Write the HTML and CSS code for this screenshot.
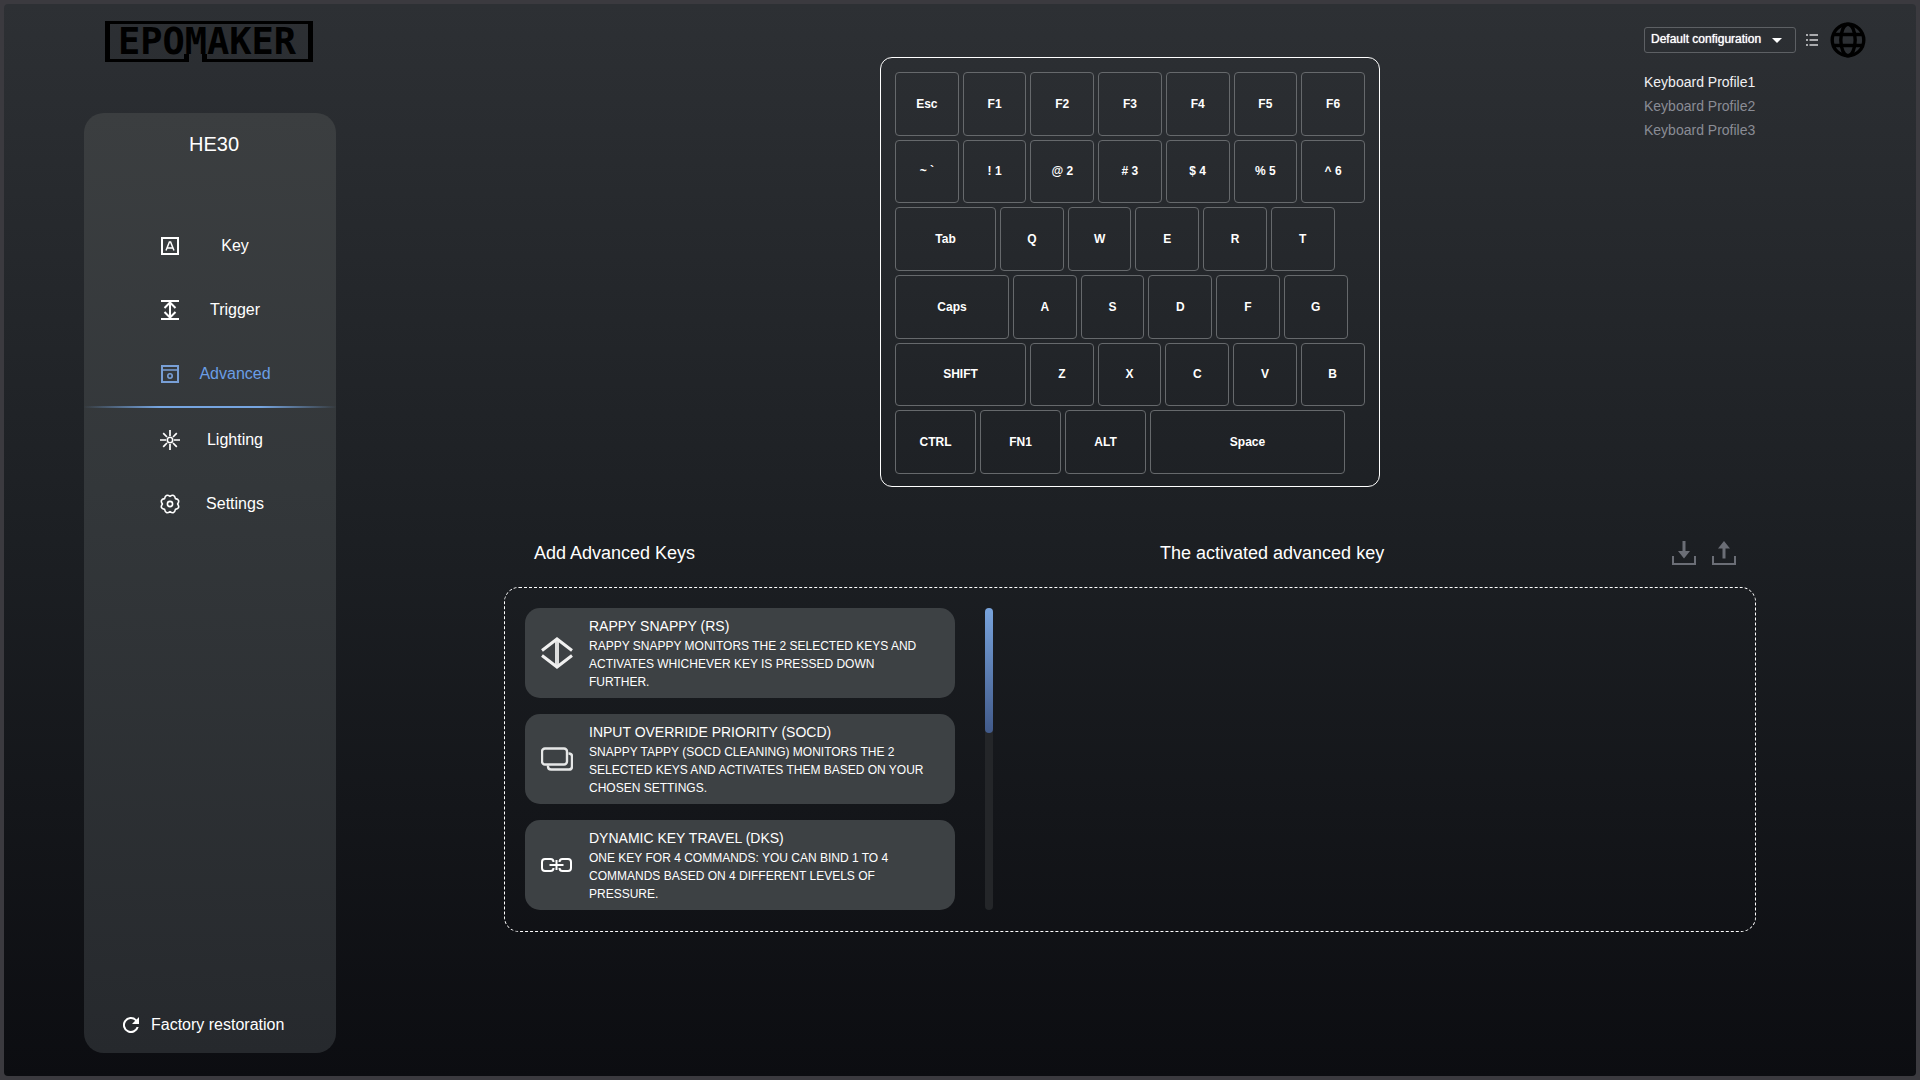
FILE: index.html
```html
<!DOCTYPE html>
<html lang="en">
<head>
<meta charset="UTF-8">
<meta name="viewport" content="width=device-width, initial-scale=1.0">
<title>HE30 - Advanced</title>
<link rel="stylesheet" href="styles.css">
</head>
<body>
<div class="app">

  <!-- Logo and side menu -->
  <div class="left">
    <div class="logo">
      <svg class="logo-frame" viewBox="0 0 208 41" preserveAspectRatio="none" aria-hidden="true">
        <path d="M84 33V41H0V0H208V41H97V33H102V38H203V3H5V38H79V33Z"/>
      </svg>
      <span class="logo-text">EPOMAKER</span>
    </div>

    <aside class="sidebar">
      <h1 class="device">HE30</h1>
      <nav class="menu">
        <a class="menu-item" href="#key">
          <svg viewBox="0 0 18 18" fill="none" stroke="currentColor"><rect x="1" y="1" width="16" height="16" stroke-width="2"/><path d="M5 13.5 8.4 5H9.6L13 13.5M6.4 11H11.6" stroke-width="1.5"/></svg>
          <span>Key</span>
        </a>
        <a class="menu-item" href="#trigger">
          <svg viewBox="0 0 18 20" fill="none" stroke="currentColor"><path d="M0 1H18M0 19H18M9 2V18" stroke-width="2"/><path d="M3.5 8 9 2.5 14.5 8M3.5 12 9 17.5 14.5 12" stroke-width="2"/></svg>
          <span>Trigger</span>
        </a>
        <a class="menu-item active" href="#advanced">
          <svg viewBox="0 0 18 18" fill="none" stroke="#789fd6"><rect x="1" y="1" width="16" height="16" stroke-width="2"/><path d="M1 5H17" stroke-width="1.5"/><circle cx="9" cy="11" r="2.2" stroke-width="1.6"/></svg>
          <span>Advanced</span>
        </a>
        <a class="menu-item" href="#lighting">
          <svg class="wide" viewBox="0 0 20 20" fill="none" stroke="currentColor"><circle cx="10" cy="10" r="2.7" stroke-width="1.6"/><path d="M10 0V6M10 14V20M0 10H6M14 10H20M3.2 3.2 7 7M13 13 16.8 16.8M3.2 16.8 7 13M13 7 16.8 3.2" stroke-width="1.7"/></svg>
          <span>Lighting</span>
        </a>
        <a class="menu-item" href="#settings">
          <svg class="wide" viewBox="0 0 20 20" fill="none" stroke="currentColor" stroke-width="1.6" stroke-linejoin="round"><path d="M17.6 10Q20.6 14.4 15.4 15.4Q14.4 20.6 10 17.6Q5.600 20.600 4.600 15.400Q-.6 14.400 2.400 10Q-.6 5.600 4.600 4.600Q5.600 -.6 10 2.400Q14.400 -.6 15.400 4.600Q20.600 5.600 17.600 10Z"/><circle cx="10" cy="10" r="2.6"/></svg>
          <span>Settings</span>
        </a>
      </nav>
      <button class="restore" type="button">
        <svg viewBox="0 0 16 16"><path d="M13.6 2.4A8 8 0 1 0 15.7 10H13.6A6 6 0 1 1 12.2 3.8L9 7H16V0Z" fill="currentColor"/></svg>
        Factory restoration
      </button>
    </aside>
  </div>

  <main class="main">
    <div class="stage">
      <!-- Left half of the split keyboard -->
      <div class="keyboard">
        <div class="row">
          <button class="key">Esc</button>
          <button class="key">F1</button>
          <button class="key">F2</button>
          <button class="key">F3</button>
          <button class="key">F4</button>
          <button class="key">F5</button>
          <button class="key">F6</button>
        </div>
        <div class="row">
          <button class="key">~ `</button>
          <button class="key">! 1</button>
          <button class="key">@ 2</button>
          <button class="key"># 3</button>
          <button class="key">$ 4</button>
          <button class="key">% 5</button>
          <button class="key">^ 6</button>
        </div>
        <div class="row">
          <button class="key key-tab">Tab</button>
          <button class="key">Q</button>
          <button class="key">W</button>
          <button class="key">E</button>
          <button class="key">R</button>
          <button class="key">T</button>
        </div>
        <div class="row">
          <button class="key key-caps">Caps</button>
          <button class="key">A</button>
          <button class="key">S</button>
          <button class="key">D</button>
          <button class="key">F</button>
          <button class="key">G</button>
        </div>
        <div class="row">
          <button class="key key-shift">SHIFT</button>
          <button class="key">Z</button>
          <button class="key">X</button>
          <button class="key">C</button>
          <button class="key">V</button>
          <button class="key">B</button>
        </div>
        <div class="row">
          <button class="key key-mod">CTRL</button>
          <button class="key key-mod">FN1</button>
          <button class="key key-mod">ALT</button>
          <button class="key key-space">Space</button>
        </div>
      </div>

      <!-- Configuration and profiles -->
      <div class="config">
        <div class="config-bar">
          <div class="select-wrap">
            <select class="config-select" aria-label="Configuration">
              <option>Default configuration</option>
            </select>
            <svg class="caret" viewBox="0 0 10 5"><path d="M0 0H10L5 5Z" fill="#fff"/></svg>
          </div>
          <button class="icon-button list-button" type="button" aria-label="Configuration list">
            <svg viewBox="0 0 12 12" fill="none" stroke="#d4d5d7" stroke-width="1.3"><path d="M0 1H2M3.5 1H12M0 6H2M3.5 6H12M0 11H2M3.5 11H12"/></svg>
          </button>
          <button class="icon-button globe-button" type="button" aria-label="Language">
            <svg viewBox="0 0 36 36" fill="none" stroke="#000" stroke-width="3.4"><circle cx="18" cy="18" r="15.8"/><ellipse cx="18" cy="18" rx="7.2" ry="15.8"/><path d="M3.5 12.5H32.5M3.5 23.5H32.5"/></svg>
          </button>
        </div>
        <div class="profiles">
          <button class="profile current" type="button">Keyboard Profile1</button>
          <button class="profile" type="button">Keyboard Profile2</button>
          <button class="profile" type="button">Keyboard Profile3</button>
        </div>
      </div>
    </div>

    <section class="advanced">
      <div class="headings">
        <h2>Add Advanced Keys</h2>
        <h2>The activated advanced key</h2>
        <div class="actions">
          <button class="icon-button" type="button" aria-label="Import">
            <svg viewBox="0 0 24 24"><path d="M1 15V23H23V15" fill="none" stroke="currentColor" stroke-width="2"/><path d="M10.5 0H13.5V10H18L12 17.5 6 10H10.5Z" fill="currentColor"/></svg>
          </button>
          <button class="icon-button" type="button" aria-label="Export">
            <svg viewBox="0 0 24 24"><path d="M1 15V23H23V15" fill="none" stroke="currentColor" stroke-width="2"/><path d="M10.5 17.5H13.5V7.5H18L12 0 6 7.5H10.5Z" fill="currentColor"/></svg>
          </button>
        </div>
      </div>

      <div class="panel">
        <div class="card-list">
          <button class="card" type="button">
            <svg viewBox="0 0 32 32" fill="none" stroke="#f0f0f0"><path d="M16 2V30" stroke="#dcdddd" stroke-width="4"/><path d="M1 13.5 16 2 31 13.5M1 18.5 16 30 31 18.5" stroke-width="3"/></svg>
            <span class="card-text">
              <span class="card-title">RAPPY SNAPPY (RS)</span>
              <span class="card-desc">RAPPY SNAPPY MONITORS THE 2 SELECTED KEYS AND ACTIVATES WHICHEVER KEY IS PRESSED DOWN FURTHER.</span>
            </span>
          </button>
          <button class="card" type="button">
            <svg viewBox="0 0 32 32" fill="none" stroke="#e6e7e7"><rect x="1" y="5.5" width="25" height="16" rx="3" stroke-width="2.4"/><path d="M27.5 10.5H28Q31 10.5 31 13.5V23.5Q31 26.5 28 26.5H10Q7 26.5 7 23.5V22.5" stroke-width="2.4"/></svg>
            <span class="card-text">
              <span class="card-title">INPUT OVERRIDE PRIORITY (SOCD)</span>
              <span class="card-desc">SNAPPY TAPPY (SOCD CLEANING) MONITORS THE 2 SELECTED KEYS AND ACTIVATES THEM BASED ON YOUR CHOSEN SETTINGS.</span>
            </span>
          </button>
          <button class="card" type="button">
            <svg viewBox="0 0 32 32" fill="none" stroke="#fff" stroke-width="2"><path d="M12.5 13Q12.500 10 9.500 10H4Q1 10 1 13V19Q1 22 4 22H9.500Q12.500 22 12.500 19M18.500 13Q18.500 10 21.500 10H27Q30 10 30 13V19Q30 22 27 22H21.500Q18.500 22 18.500 19M8.500 16H22.500M15.500 11V21"/></svg>
            <span class="card-text">
              <span class="card-title">DYNAMIC KEY TRAVEL (DKS)</span>
              <span class="card-desc">ONE KEY FOR 4 COMMANDS: YOU CAN BIND 1 TO 4 COMMANDS BASED ON 4 DIFFERENT LEVELS OF PRESSURE.</span>
            </span>
          </button>
        </div>
        <div class="scrollbar"><div class="thumb"></div></div>
        <div class="activated"></div>
      </div>
    </section>
  </main>

</div>
</body>
</html>
```
FILE: styles.css
```css
* {
  box-sizing: border-box;
}
body {
  margin: 0;
  padding: 4px;
  background: #3b3a3f;
  color: #fff;
  font-family: "Liberation Sans", Arial, sans-serif;
  font-size: 16px;
}
button {
  margin: 0;
  padding: 0;
  border: none;
  background: none;
  color: inherit;
  font: inherit;
  cursor: pointer;
}
svg {
  display: block;
}
.app {
  display: flex;
  gap: 8px;
  min-height: calc(100vh - 8px);
  padding-left: 80px;
  border-radius: 4px;
  background: linear-gradient(#2d3034, #1c1f23 50%, #0c0d11);
}

/* Left column */
.left {
  display: flex;
  flex-direction: column;
  flex: none;
  width: 252px;
  padding: 17px 0 23px;
}
.logo {
  position: relative;
  width: 208px;
  height: 41px;
  margin: 0 0 51px 21px;
  padding-right: 4px;
  color: #000;
  text-align: center;
}
.logo-frame {
  position: absolute;
  inset: 0;
  width: 100%;
  height: 100%;
}
.logo-text {
  font-family: "DejaVu Sans Mono", monospace;
  font-size: 37px;
  font-weight: bold;
  line-height: 41px;
}
.sidebar {
  display: flex;
  flex-direction: column;
  flex: 1;
  padding: 16px 0 13px;
  border-radius: 20px;
  background: linear-gradient(#3b3e40, #33373a 40%, #26292d);
}
.device {
  margin: 0;
  padding-left: 8px;
  font-size: 20px;
  font-weight: normal;
  line-height: 30px;
  text-align: center;
}
.menu {
  flex: 1;
  margin-top: 55px;
}
.menu-item {
  display: grid;
  grid-template-columns: 20px 88px;
  justify-content: center;
  align-items: center;
  gap: 11px;
  height: 64px;
  padding-left: 19px;
  color: #fff;
  text-align: center;
  text-decoration: none;
}
.menu-item svg {
  justify-self: center;
  width: 18px;
  height: 20px;
}
.menu-item svg.wide {
  width: 20px;
}
.menu-item.active {
  box-sizing: content-box;
  height: 64px;
  color: #6a9ee6;
  border-bottom: 2px solid;
  border-image: linear-gradient(90deg, transparent, #76a5e0 30%, #76a5e0 70%, transparent) 1;
}
.restore {
  display: flex;
  align-items: center;
  gap: 12px;
  margin-left: 39px;
  line-height: 30px;
}
.restore svg {
  width: 16px;
  height: 16px;
}

/* Keyboard */
.main {
  flex: 1;
}
.stage {
  display: grid;
  grid-template-columns: 1fr 500px 1fr;
  align-items: start;
}
.keyboard {
  grid-column: 2;
  display: grid;
  grid-template-rows: repeat(6, 1fr);
  gap: 4px;
  aspect-ratio: 500 / 430;
  margin-top: 53px;
  padding: 14px 14px 12px;
  border: 1px solid #fff;
  border-radius: 12px;
}
.row {
  display: flex;
  gap: 4px;
}
.key {
  width: calc((100% - 24px) / 7);
  border: 1px solid #66696c;
  border-radius: 4px;
  font-size: 12px;
  font-weight: bold;
}
.key-tab {
  width: 101px;
}
.key-caps {
  width: 114px;
}
.key-shift {
  width: 131px;
}
.key-mod {
  width: 81px;
}
.key-space {
  width: 195px;
}

/* Configuration */
.config {
  justify-self: end;
  padding: 18px 50px 0 0;
}
.config-bar {
  display: flex;
  align-items: center;
}
.select-wrap {
  position: relative;
}
.config-select {
  appearance: none;
  width: 152px;
  height: 26px;
  padding: 0 24px 2px 6px;
  border: 1px solid #5d6064;
  border-radius: 3px;
  background: transparent;
  color: #fff;
  font-family: inherit;
  font-size: 12px;
  text-shadow: 0 0 1px #fff;
}
.config-select option {
  background: #2d3034;
}
.caret {
  position: absolute;
  top: 11px;
  right: 14px;
  width: 10px;
  height: 5px;
  pointer-events: none;
}
.list-button {
  margin: 0 12px 0 10px;
}
.list-button svg {
  width: 12px;
  height: 12px;
}
.globe-button svg {
  width: 36px;
  height: 36px;
}
.profiles {
  display: flex;
  flex-direction: column;
  align-items: flex-start;
  margin-top: 12px;
}
.profile {
  color: #8a8c95;
  font-size: 14px;
  line-height: 24px;
}
.profile.current {
  color: #f0f0f2;
}

/* Advanced keys */
.advanced {
  margin: 46px 160px 0;
}
.headings {
  display: grid;
  grid-template-columns: 50% 1fr auto;
  align-items: center;
  height: 40px;
}
.headings h2 {
  margin: 0;
  padding-left: 30px;
  font-size: 18px;
  font-weight: normal;
}
.actions {
  display: flex;
  gap: 16px;
  padding-right: 20px;
  color: #6b6e76;
}
.actions svg {
  width: 24px;
  height: 24px;
}
.panel {
  display: flex;
  gap: 30px;
  margin-top: 14px;
  padding: 20px 20px 21px;
  border: 1px dashed #fff;
  border-radius: 15px;
}
.card-list {
  display: flex;
  flex-direction: column;
  gap: 16px;
  width: 430px;
}
.card {
  display: flex;
  align-items: center;
  gap: 16px;
  height: 90px;
  padding: 0 24px 0 16px;
  border-radius: 15px;
  background: #3d4144;
  text-align: left;
}
.card svg {
  flex: none;
  width: 32px;
  height: 32px;
}
.card-title,
.card-desc {
  display: block;
}
.card-title {
  font-size: 14px;
  line-height: 21px;
}
.card-desc {
  font-size: 12px;
  line-height: 18px;
}
.scrollbar {
  width: 8px;
  border-radius: 4px;
  background: #242629;
}
.thumb {
  height: 125px;
  border-radius: 4px;
  background: linear-gradient(#78a3dc, #415a8a);
}
.activated {
  flex: 1;
}
```
